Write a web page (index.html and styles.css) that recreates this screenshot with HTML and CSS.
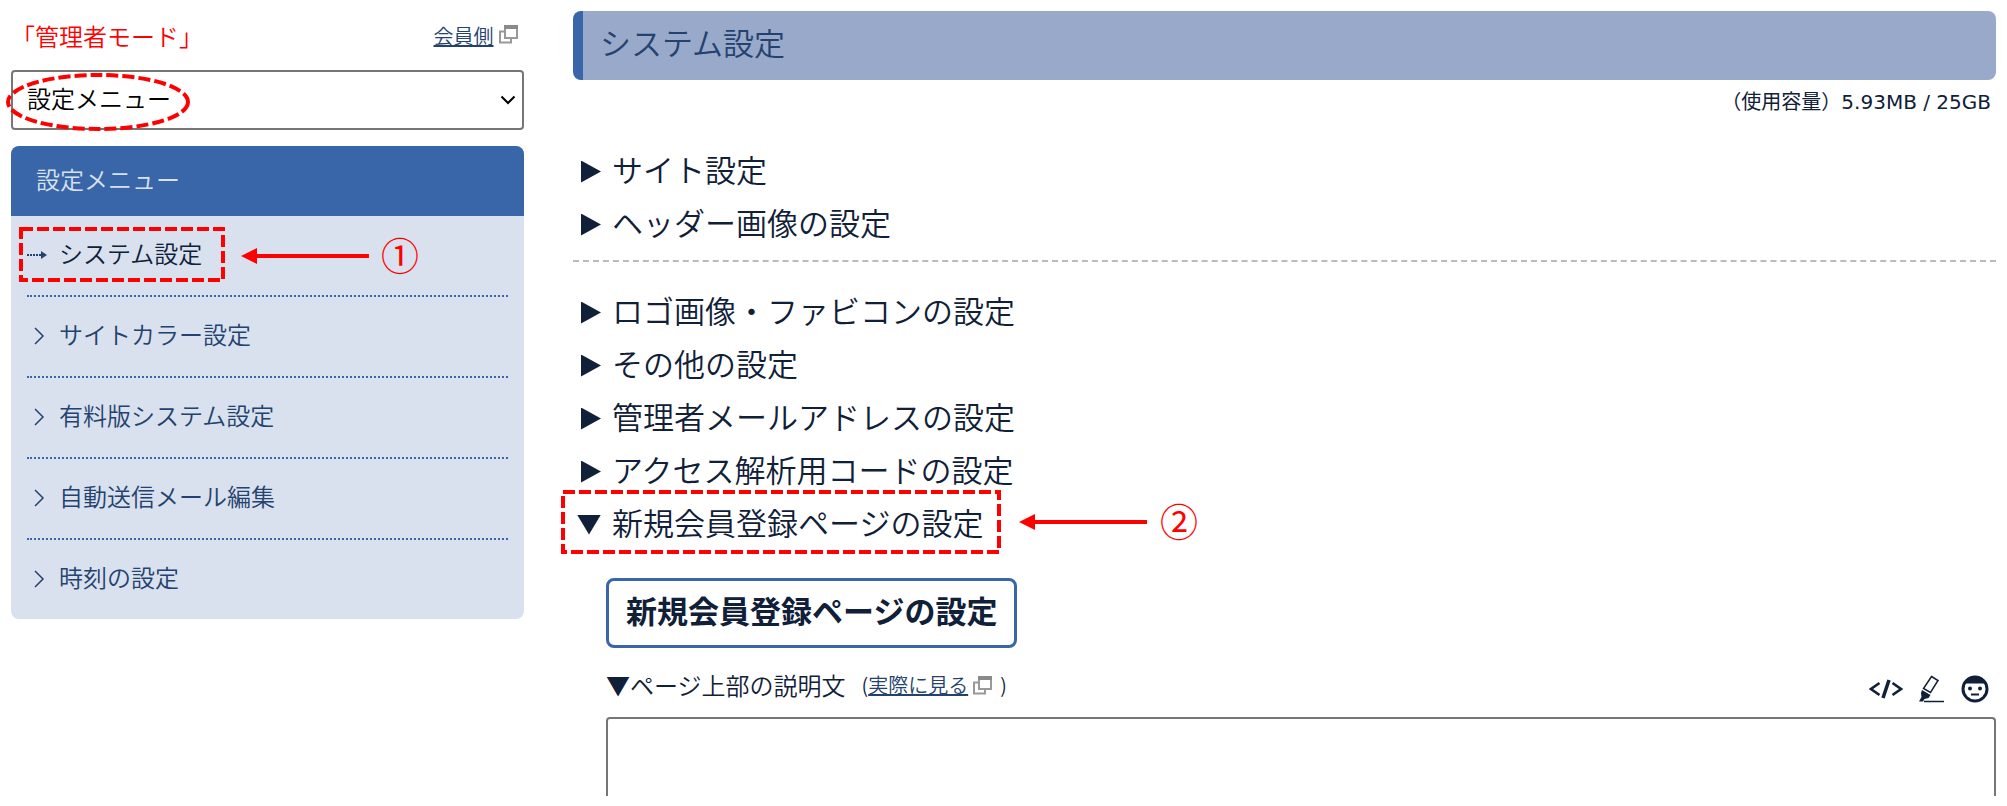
FILE: index.html
```html
<!doctype html>
<html lang="ja">
<head>
<meta charset="utf-8">
<title>システム設定</title>
<link rel="stylesheet" href="styles.css">
</head>

<body>
<svg class="defs" aria-hidden="true">
	<symbol id="i_win" viewBox="0 0 20 20">
		<path d="M6.5 7.5H2v11h11v-4.500" fill="none" stroke="#999" stroke-width="2"/>
		<path d="M7 2h12v12H7z" fill="#fff" stroke="#999" stroke-width="2"/>
		<path d="M6 1h14v4H6z" fill="#8a8a8a"/>
	</symbol>
	<symbol id="i_gt" viewBox="0 0 10 18">
		<path d="M1 1l8 8-8 8" fill="none" stroke="currentColor" stroke-width="1.5"/>
	</symbol>
</svg>

<div id="wrap">
	<div id="side">
		<div class="mode">
			<span class="red">「管理者モード」</span>
			<span><a href="#">会員側</a> <svg class="win"><use href="#i_win"/></svg></span>
		</div>
		<div class="sel">
			<select aria-label="メニュー選択">
				<option>設定メニュー</option>
			</select>
			<svg class="arrow" viewBox="0 0 16 10"><path d="M1.500 1.500L8 8l6.500-6.500" fill="none" stroke="#000" stroke-width="2"/></svg>
			<svg class="mark ring" viewBox="0 0 184 60"><ellipse cx="92" cy="30" rx="90" ry="27"/></svg>
		</div>
		<nav>
			<h2>設定メニュー</h2>
			<ul>
				<li class="on">
					<a href="#"><svg class="ico" viewBox="0 0 24 18"><path d="M0 9h15" stroke="currentColor" stroke-width="2" stroke-dasharray="2 1"/><path d="M14 8V5l6 4-6 4z" fill="currentColor"/></svg>システム設定</a>
					<svg class="mark m1" viewBox="0 0 410 60">
						<rect x="2" y="2" width="202" height="51"/>
						<path class="line" d="M236 29h114"/>
						<path class="head" d="M222 29l16-8v16z"/>
						<text x="362" y="43">①</text>
					</svg>
				</li>
				<li><a href="#"><svg class="ico"><use href="#i_gt"/></svg>サイトカラー設定</a></li>
				<li><a href="#"><svg class="ico"><use href="#i_gt"/></svg>有料版システム設定</a></li>
				<li><a href="#"><svg class="ico"><use href="#i_gt"/></svg>自動送信メール編集</a></li>
				<li><a href="#"><svg class="ico"><use href="#i_gt"/></svg>時刻の設定</a></li>
			</ul>
		</nav>
	</div>

	<div id="main">
		<h1>システム設定</h1>
		<p class="size">（使用容量）5.93MB / 25GB</p>
		<div class="group">
			<details><summary>サイト設定</summary></details>
			<details><summary>ヘッダー画像の設定</summary></details>
		</div>
		<details><summary>ロゴ画像・ファビコンの設定</summary></details>
		<details><summary>その他の設定</summary></details>
		<details><summary>管理者メールアドレスの設定</summary></details>
		<details><summary>アクセス解析用コードの設定</summary></details>
		<details open>
			<summary>新規会員登録ページの設定
				<svg class="mark m2" viewBox="0 0 650 64">
					<rect x="2" y="2" width="436" height="60"/>
					<path class="line" d="M472 32h114"/>
					<path class="head" d="M458 32l16-8v16z"/>
					<text x="599" y="46">②</text>
				</svg>
			</summary>
			<div class="inner">
				<h3>新規会員登録ページの設定</h3>
				<div class="bar">
					<label for="txt">▼ページ上部の説明文</label>
					<span class="see">(<a href="#">実際に見る</a><svg class="win"><use href="#i_win"/></svg>)</span>
					<div class="tools">
						<button type="button" aria-label="HTML"><svg width="34" height="28" viewBox="0 0 34 28"><path d="M10.500 8L2 14l8.500 6M23.500 8l8.500 6-8.500 6" fill="none" stroke="currentColor" stroke-width="2.600"/><path d="M20 5l-6 18" stroke="currentColor" stroke-width="3.500"/></svg></button>
						<button type="button" aria-label="マーカー"><svg width="26" height="28" viewBox="0 0 26 28"><path d="M12.500 1.500l6.500 4-7.500 12-7-4z" fill="none" stroke="currentColor" stroke-width="1.500"/><path d="M3 15l8.500 5-2 3-4 1-1.500 2.500H0L2.500 22l-.5-4z" fill="currentColor"/><path d="M5 26.500h20" stroke="currentColor" stroke-width="1.500"/></svg></button>
						<button type="button" aria-label="絵文字"><svg width="28" height="28" viewBox="0 0 28 28"><circle cx="14" cy="14" r="12" fill="none" stroke="currentColor" stroke-width="3"/><path d="M3 8.500a12 12 0 0 1 22 0z" fill="currentColor"/><circle cx="9" cy="13.500" r="2" fill="currentColor"/><circle cx="19" cy="13.500" r="2" fill="currentColor"/><path d="M10 19.500h8" stroke="currentColor" stroke-width="2"/></svg></button>
					</div>
				</div>
				<textarea id="txt"></textarea>
			</div>
		</details>
	</div>
</div>
</body>
</html>
```

FILE: styles.css
```css
*{ margin:0; padding:0; box-sizing:border-box; list-style:none;}
body{ background:#fff; color:#0f2038; font:350 24px/36px "Noto Sans CJK JP",sans-serif;}
a{ color:#24426f;}
.defs{ display:none;}
#wrap{ display:flex; gap:49px; padding:11px;}
#side{ flex:0 0 513px;}
#main{ flex:1; min-width:0;}

.mode{ display:flex; justify-content:space-between; padding:7px 6px 16px 0; font-size:20px;}
.mode .red{ font-size:24px; color:#f00;}
.win{ width:20px; height:20px;}

.sel{ position:relative; margin-bottom:16px;}
.sel select{ display:block; width:100%; height:60px; padding:0 14px 4px; border:2px solid #767676; border-radius:4px; background:#fff; color:#000; font:inherit; appearance:none;}
.sel .arrow{ position:absolute; right:8px; top:25px; width:16px; height:10px; pointer-events:none;}

nav{ background:#d8e1ed; border-radius:8px; overflow:hidden;}
nav h2{ background:#3866a8; color:#d8e1ed; padding:15px 25px 19px; font-size:24px; font-weight:350;}
nav ul{ padding:0 16px;}
nav li{ position:relative; padding:19px 0 24px; border-bottom:2px dotted #3866a8;}
nav li:last-child{ border-bottom:0;}
nav li a{ display:flex; align-items:center; text-decoration:none;}
nav li.on a{ color:#0f2038;}
nav .ico{ width:24px; height:18px; margin:4px 8px 0 0; color:#24426f;}

/* red guide marks */
.mark{ position:absolute; overflow:visible; pointer-events:none;}
.mark ellipse,.mark rect{ fill:none; stroke:#f00; stroke-width:4; stroke-dasharray:12 4;}
.mark .line{ stroke:#f00; stroke-width:4;}
.mark .head{ fill:#f00;}
.mark text{ fill:#f00; font-size:38px; font-weight:400;}
.ring{ left:-5px; top:2px; width:184px; height:60px;}
.m1{ left:-8px; top:11px; width:410px; height:60px;}
.m2{ left:-12px; top:-8px; width:650px; height:64px;}

h1{ background:#98a9ca; color:#24426f; border-left:10px solid #3866a8; border-radius:8px; padding:13px 17px 20px; font-size:31px; font-weight:350;}
.size{ margin:7px 0 28px; font-family:"DejaVu Sans","Noto Sans CJK JP",sans-serif; font-size:20px; font-weight:400; line-height:30px; text-align:right; padding-right:5px;}
.group{ border-bottom:2px dashed #bbb; padding-bottom:9px; margin-bottom:24px;}
summary{ position:relative; display:flex; align-items:center; padding:0 0 5px 8px; height:53px; font-size:31px; cursor:pointer;}
summary:before{ content:""; width:20px; height:22px; margin:5px 11px 0 0; background:#0f2038; clip-path:polygon(0 0,100% 50%,0 100%);}
details[open] summary{ padding-left:4px;}
details[open] summary:before{ width:24px; height:20px; clip-path:polygon(0 0,100% 0,50% 100%);}

.inner{ padding:27px 0 0 33px;}
.inner h3{ display:inline-block; vertical-align:top; border:3px solid #3866a8; border-radius:8px; padding:11px 17px 17px; font-size:31px; line-height:36px;}
.bar{ display:flex; align-items:center; padding:18px 7px 14px 0;}
.see{ display:flex; align-items:center; margin-left:16px; font-size:20px;}
.see .win{ margin:0 8px 0 4px;}
.tools{ display:flex; gap:16px; margin-left:auto; padding-top:9px;}
.tools button{ display:block; border:0; background:none; color:#0f2038; cursor:pointer;}
.tools svg{ display:block;}
textarea{ display:block; width:100%; height:79px; border:2px solid #767676; border-bottom:0; border-radius:4px 4px 0 0; background:#fff; font:inherit; resize:none;}
```
